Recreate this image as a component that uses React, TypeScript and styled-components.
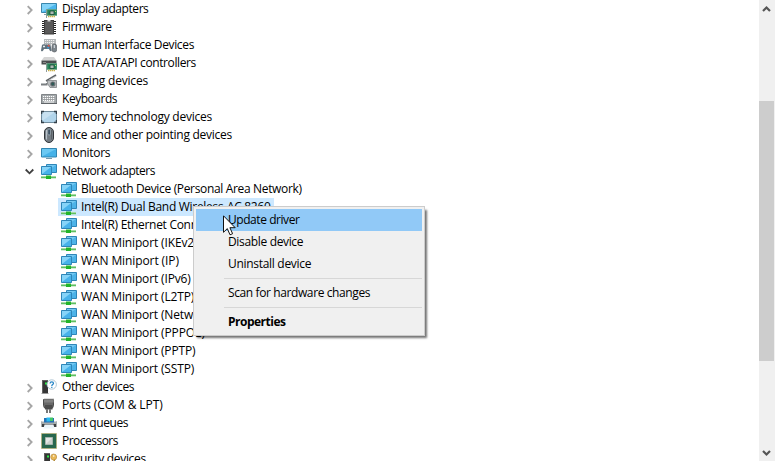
import React from "react";
import styled, { createGlobalStyle } from "styled-components";

const GlobalStyle = createGlobalStyle`
  body {
    margin: 0;
    background: #fff;
    color: #000;
    font: 12px/18px "Open Sans", "Noto Sans", sans-serif;
    overflow: hidden;
  }
`;

const Window = styled.div`
  position: relative;
  display: flex;
  width: 775px;
  height: 461px;
  overflow: hidden;
`;

const Tree = styled.div`
  flex: 1;
  height: 461px;
  overflow: hidden;
`;

const TreeRow = styled.div<{ $child?: boolean }>`
  display: flex;
  align-items: center;
  height: 18px;
  padding-left: ${(p) => (p.$child ? 58 : 25)}px;
`;

const Chevron = styled.svg`
  width: 10px;
  height: 18px;
  margin-right: 6px;
  fill: none;
`;

const Glyph = styled.svg`
  flex: none;
  width: 16px;
  height: 18px;
`;

const Label = styled.span<{ $track: number; $gap?: number }>`
  padding-left: ${(p) => p.$gap ?? 5}px;
  letter-spacing: ${(p) => p.$track}px;
  white-space: pre;
`;

const ChildItem = styled.div<{ $selected?: boolean }>`
  display: flex;
  align-items: center;
  height: 18px;
  padding: 0 3px;
  background: ${(p) => (p.$selected ? "#cce8ff" : "transparent")};
`;

const ScrollBar = styled.div`
  display: flex;
  flex-direction: column;
  width: 16px;
  background: #f0f0f0;
`;

const ScrollArrow = styled.svg`
  width: 16px;
  height: 18px;
  fill: none;
  stroke: #555;
  stroke-width: 2.2;
`;

const ScrollTrack = styled.div`
  flex: 1;
  padding-top: 83px;
`;

const ScrollThumb = styled.div`
  width: 15px;
  height: 260px;
  background: #cdcdcd;
`;

const Menu = styled.div`
  position: absolute;
  left: 193px;
  top: 206px;
  box-sizing: border-box;
  width: 232px;
  height: 130px;
  padding: 2px;
  border: 1px solid #ccc;
  background: #f0f0f0;
  box-shadow: 3px 3px 2px -1px rgba(0, 0, 0, 0.55);
`;

const MenuItem = styled.div<{ $active?: boolean; $bold?: boolean; $track: number }>`
  height: 22px;
  padding-left: 32px;
  line-height: 22px;
  letter-spacing: ${(p) => p.$track}px;
  font-weight: ${(p) => (p.$bold ? 700 : 400)};
  background: ${(p) => (p.$active ? "#91c9f7" : "transparent")};
`;

const Separator = styled.div`
  height: 1px;
  margin: 3px 0 3px 28px;
  background: #d7d7d7;
`;

const Pointer = styled.svg`
  position: absolute;
  left: 223px;
  top: 215px;
  width: 13px;
  height: 21px;
`;

const Board = () => (
  <g>
    <path d="M5.5 9v9" stroke="#8d9a9a" />
    <path d="M6 9.5h10v6H6z" fill="#28845a" stroke="#6ca78a" strokeWidth=".7" />
    <path d="M7 16.5h7" stroke="#c9b04a" strokeWidth="1.5" strokeDasharray="1.5 .5" />
    <path d="M9 11h4v3.5H9z" fill="#aeb9b5" stroke="#154e35" strokeWidth=".8" />
    <path d="M14 11h1v1h-1z" fill="#b7df72" />
  </g>
);

const Tower = () => (
  <g>
    <path d="M1 2h6v13H1z" fill="#353535" />
    <path d="M1 2.500h6M1.500 3v12" fill="none" stroke="#747474" strokeWidth=".7" />
    <path d="M4 4.500h2v2H4z" fill="#2bea45" />
    <path d="M.5 15.500h7" stroke="#9a9a9a" />
  </g>
);

const art = {
  display: (
    <>
      <path d="M.5 3.500h15v9H.5z" fill="#4bb6ed" stroke="#3b87ac" />
      <path d="M1 4h14L1 12z" fill="#83d3f8" />
      <path d="M3 14.500h4" stroke="#8aa0ac" />
      <Board />
    </>
  ),
  firmware: (
    <>
      <path d="M1 3.500h14M1 5.500h14M1 7.500h14M1 9.500h14M1 11.500h14M1 13.500h14M1 15.500h14" stroke="#242424" />
      <path d="M3 2h10v14.500H3z" fill="#3d3d3d" />
      <path d="M4 3h8v12.500H4z" fill="#5a5a5a" />
      <path d="M6.500 2h3v1.500h-3z" fill="#d8d8d8" />
    </>
  ),
  hid: (
    <>
      <path d="M3 3h12v6H3z" fill="#b4b8ba" />
      <path d="M4 4.500h10M4 6.500h10M4 8.500h10" stroke="#f2f2f2" strokeDasharray="1.2 .8" />
      <path d="M1 9c1-1.500 3-.5 4.500-.5S8.500 7.500 9.500 9l1.200 5.500c-.5 1.300-1.800.8-2.700-1.500H3C2 15.500.5 16 0 14.500z" fill="#60717c" />
      <path d="M2 10.500h2M3 9.500v2" stroke="#e7edf0" />
      <circle cx="7.700" cy="9.700" r="1" fill="#e75649" />
      <circle cx="7" cy="11.700" r=".9" fill="#38a1e5" />
      <rect x="11" y="8" width="4.700" height="8" rx="2.300" fill="#7c858b" stroke="#4d5358" strokeWidth=".6" />
      <path d="M13.300 9v3" stroke="#dce3e8" />
    </>
  ),
  ide: (
    <>
      <path d="M3 3h10l2.500 3.500H.5z" fill="#d5d5d5" />
      <path d="M.5 6.500h15v4H.5z" fill="#4b4e50" />
      <path d="M2 8.500h3" stroke="#8b8b8b" />
      <Board />
    </>
  ),
  imaging: (
    <>
      <path d="m5 9 10-6" stroke="#5e6265" strokeWidth="1.500" />
      <path d="m7.500 8.500 8-4.500" stroke="#c4c7c8" />
      <path d="M6.500 8.500h9v7H9l-2.500-4z" fill="#b9bdbf" stroke="#72777a" strokeWidth=".7" />
      <path d="M0 11h6.500v2.500H0z" fill="#7b7f82" />
      <path d="M0 11.500h5" stroke="#b9bdbf" />
      <circle cx="11.800" cy="12" r="2.600" fill="#6b7477" />
      <circle cx="11.800" cy="12" r="1.400" fill="#1c373b" />
      <path d="M11.500 11.500h1v1h-1z" fill="#5ccaaa" />
    </>
  ),
  keyboard: (
    <>
      <path d="M.5 4.500h15v9H.5z" fill="#a3a8ab" stroke="#818588" />
      <path d="M2 6.500h12M2 8.500h12M2 10.500h12" stroke="#fff" strokeDasharray="1.200 .8" />
      <path d="M3 7.500h11M3 9.500h10" stroke="#999" strokeDasharray=".8 1.200" />
      <path d="M3 12h10" stroke="#f7f7f7" />
      <path d="M0 13.500h16" stroke="#606468" />
    </>
  ),
  memory: (
    <>
      <rect x=".5" y="3.500" width="15" height="11" rx="1" fill="#b2d5eb" stroke="#708c9d" />
      <path d="M2 4h12L1 13z" fill="#c7e1f1" />
      <path d="M.5 6V3.500H3M13 3.500h2.500V6M.5 12v2.500H3M13 14.500h2.500V12" fill="none" stroke="#35424b" strokeWidth="1.500" />
    </>
  ),
  mouse: (
    <>
      <rect x="3.500" y="1.500" width="9" height="15" rx="4.500" fill="#747c83" stroke="#32363a" />
      <path d="M5.500 4v9.500" stroke="#b8c2ca" strokeWidth="1.200" />
      <path d="M10.500 4v9.500" stroke="#5c6369" />
      <rect x="7" y="3" width="2.200" height="6" rx="1" fill="#263949" stroke="#d0e3ee" strokeWidth=".5" />
    </>
  ),
  monitor: (
    <>
      <path d="M.5 4.500h15v8.500H.5z" fill="#46b2e8" stroke="#3185b1" />
      <path d="M1 5h14L1 12.500z" fill="#6bc8f2" />
      <path d="M5 14.500h6" stroke="#7699ac" />
    </>
  ),
  network: (
    <>
      <path d="M5.500 2.500h10v8h-10z" fill="#4db3e8" stroke="#2f86b8" />
      <path d="M6 3h9l-9 6z" fill="#74c9f2" />
      <path d="M0 14h15v2.500H0z" fill="#a5dba4" />
      <path d="M0 15.500h15" stroke="#5fbf62" />
      <path d="M5 13.500h5V17H5z" fill="#22b52a" />
      <path d="M.5 4.500h10v8H.5z" fill="#47b2ea" stroke="#2f86b8" />
      <path d="M1 5h9l-9 7z" fill="#86d4f8" />
    </>
  ),
  other: (
    <>
      <Tower />
      <circle cx="10.700" cy="6.500" r="4.700" fill="#fff" stroke="#9db9c9" strokeWidth=".8" />
      <path d="M9.100 5.500q0-1.700 1.700-1.700t1.700 1.500c0 1.300-1.700 1.200-1.700 2.600M10.800 8.800V10" fill="none" stroke="#2384c6" strokeWidth="1.200" />
    </>
  ),
  port: (
    <>
      <path d="M2.500 3.500h10v6l-1 2.500h-8l-1-2.500z" fill="#686868" stroke="#4b4b4b" />
      <path d="M4 2v4.500M6 2v4.500M8 2v4.500M10 2v4.500M12 2v4.500" stroke="#aaa" strokeWidth=".8" />
      <path d="M4 9h7.500v4.500H4z" fill="#4c4c4c" />
      <path d="M6 13v4M9 13v4" stroke="#777" strokeWidth="2" />
    </>
  ),
  printer: (
    <>
      <path d="M3 4h10v5H3z" fill="#2472b7" />
      <path d="M5.500 3.500H9v4H5.500z" fill="#28bbee" />
      <path d="M9 3.500h3V7H9z" fill="#43c767" />
      <path d="M0 7h3v1.500h10V7h3v6H0z" fill="#a8adaf" />
      <path d="M1 10h14v3H1z" fill="#3e4244" />
      <path d="m3.500 10.500-1 4h11l-1-4z" fill="#edf5fa" />
      <path d="M.5 7.500h2.500M13 7.500h2.500" stroke="#d2d5d7" />
    </>
  ),
  processor: (
    <>
      <path d="M.5 1.500h15v15H.5z" fill="#28674e" stroke="#c7af60" strokeDasharray="1 1" />
      <path d="M1 2h14v14H1z" fill="#28674e" />
      <path d="M4.500 5.500h7v7h-7z" fill="#cbd1cd" stroke="#a6b5ae" />
      <path d="M5 6h6l-6 6z" fill="#e4e7e5" />
    </>
  ),
  security: (
    <>
      <g transform="translate(2 1)"><Tower /></g>
      <path d="M12.500 9v8l1.500 1V9z" fill="#b48c35" />
      <circle cx="12.700" cy="7" r="3" fill="#e9b857" stroke="#af843a" strokeWidth=".6" />
      <circle cx="12.700" cy="6" r=".8" fill="#fff" />
    </>
  ),
};

type IconName = keyof typeof art;
const Icon = ({ name }: { name: IconName }) => <Glyph viewBox="0 0 16 18">{art[name]}</Glyph>;

type Entry = { icon: IconName; text: string; track: number; open?: boolean };

const before: Entry[] = [
  { icon: "display", text: "Display adapters", track: -0.43 },
  { icon: "firmware", text: "Firmware", track: -0.42 },
  { icon: "hid", text: "Human Interface Devices", track: -0.35 },
  { icon: "ide", text: "IDE ATA/ATAPI controllers", track: -0.39 },
  { icon: "imaging", text: "Imaging devices", track: -0.2 },
  { icon: "keyboard", text: "Keyboards", track: -0.47 },
  { icon: "memory", text: "Memory technology devices", track: -0.23 },
  { icon: "mouse", text: "Mice and other pointing devices", track: -0.26 },
  { icon: "monitor", text: "Monitors", track: -0.28 },
  { icon: "network", text: "Network adapters", track: -0.47, open: true },
];

const adapters = [
  { text: "Bluetooth Device (Personal Area Network)", track: -0.34 },
  { text: "Intel(R) Dual Band Wireless-AC 8260", track: -0.3, selected: true },
  { text: "Intel(R) Ethernet Connection", track: -0.3 },
  { text: "WAN Miniport (IKEv2)", track: -0.14 },
  { text: "WAN Miniport (IP)", track: -0.1 },
  { text: "WAN Miniport (IPv6)", track: -0.14 },
  { text: "WAN Miniport (L2TP)", track: -0.14 },
  { text: "WAN Miniport (Network Monitor)", track: -0.15 },
  { text: "WAN Miniport (PPPOE)", track: -0.14 },
  { text: "WAN Miniport (PPTP)", track: -0.15 },
  { text: "WAN Miniport (SSTP)", track: -0.15 },
];

const after: Entry[] = [
  { icon: "other", text: "Other devices", track: -0.38 },
  { icon: "port", text: "Ports (COM & LPT)", track: -0.1 },
  { icon: "printer", text: "Print queues", track: -0.43 },
  { icon: "processor", text: "Processors", track: -0.52 },
  { icon: "security", text: "Security devices", track: -0.33 },
];

const Category = ({ icon, text, track, open }: Entry) => (
  <TreeRow>
    <Chevron viewBox="0 0 10 18">
      {open ? (
        <path d="m.7 7.500 3.800 3.800 3.800-3.800" stroke="#404040" strokeWidth="1.800" />
      ) : (
        <path d="m2.700 6.200 3.900 3.900-3.900 3.900" stroke="#a6a6a6" strokeWidth="1.900" />
      )}
    </Chevron>
    <Icon name={icon} />
    <Label $track={track}>{text}</Label>
  </TreeRow>
);

export default function App() {
  return (
    <>
      <GlobalStyle />
      <Window>
        <Tree>
          {before.map((e) => <Category key={e.text} {...e} />)}
          {adapters.map((a) => (
            <TreeRow key={a.text} $child>
              <ChildItem $selected={a.selected}>
                <Icon name="network" />
                <Label $track={a.track} $gap={4}>{a.text}</Label>
              </ChildItem>
            </TreeRow>
          ))}
          {after.map((e) => <Category key={e.text} {...e} />)}
        </Tree>
        <ScrollBar>
          <ScrollArrow viewBox="0 0 16 18"><path d="m4 11 3.500-3.500L11 11" /></ScrollArrow>
          <ScrollTrack><ScrollThumb /></ScrollTrack>
          <ScrollArrow viewBox="0 0 16 18"><path d="m4 8 3.500 3.500L11 8" /></ScrollArrow>
        </ScrollBar>
        <Menu>
          <MenuItem $active $track={-0.44}>Update driver</MenuItem>
          <MenuItem $track={-0.34}>Disable device</MenuItem>
          <MenuItem $track={-0.3}>Uninstall device</MenuItem>
          <Separator />
          <MenuItem $track={-0.39}>Scan for hardware changes</MenuItem>
          <Separator />
          <MenuItem $bold $track={-0.5}>Properties</MenuItem>
        </Menu>
        <Pointer viewBox="0 0 13 21">
          <path d="M.5.800v16.500l3.800-3.700 2.700 6.200 2.600-1.100-2.700-6h5.300z" fill="#fff" stroke="#111" strokeWidth="1" />
        </Pointer>
      </Window>
    </>
  );
}
